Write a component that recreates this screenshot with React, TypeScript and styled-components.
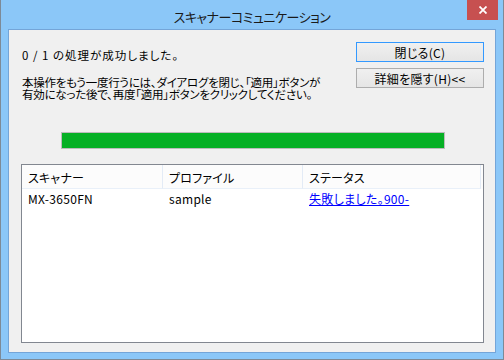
import styled, { createGlobalStyle } from "styled-components";

const columns = [
  { title: "スキャナー", width: 141 },
  { title: "プロファイル", width: 140 },
  { title: "ステータス", width: 178 },
];

export default function App() {
  return (
    <>
      <GlobalStyle />
      <Window>
        <TitleBar>
          <Title>スキャナーコミュニケーション</Title>
          <CloseButton aria-label="閉じる">
            <svg width="8" height="8" viewBox="0 0 8 8">
              <path d="M0.5 0.5 L7.5 7.5 M7.5 0.5 L0.5 7.5" stroke="#fff" strokeWidth="1.8" />
            </svg>
          </CloseButton>
        </TitleBar>
        <Client>
          <TopRow>
            <Message>
              <Paragraph $wide>0 / 1 の処理が成功しました。</Paragraph>
              <Paragraph>
                <Line>本操作をもう一度行うには、ダイアログを閉じ、「適用」ボタンが</Line>
                <Line>有効になった後で、再度「適用」ボタンをクリックしてください。</Line>
              </Paragraph>
            </Message>
            <ButtonColumn>
              <Button $focused>閉じる(C)</Button>
              <Button>詳細を隠す(H)&lt;&lt;</Button>
            </ButtonColumn>
          </TopRow>
          <Progress>
            <ProgressFill style={{ width: "100%" }} />
          </Progress>
          <ListView>
            <HeaderRow>
              {columns.map((c) => (
                <HeaderCell key={c.title} $width={c.width}>
                  {c.title}
                </HeaderCell>
              ))}
            </HeaderRow>
            <Row>
              <Cell $width={141}>MX-3650FN</Cell>
              <Cell $width={140}>sample</Cell>
              <Cell $width={178}>
                <StatusLink href="#">失敗しました。900-</StatusLink>
              </Cell>
            </Row>
          </ListView>
        </Client>
      </Window>
    </>
  );
}

// Styles
const GlobalStyle = createGlobalStyle`
  html, body {
    margin: 0;
    padding: 0;
    background: #ffffff;
  }
  * {
    box-sizing: border-box;
  }
`;

const Window = styled.div`
  width: 504px;
  height: 360px;
  display: flex;
  flex-direction: column;
  background: #8bc7f8;
  border-left: 1px solid #7d8a97;
  border-right: 1px solid #7d8a97;
  border-bottom: 1px solid #7d8a97;
  font-family: "Noto Sans CJK JP", "Noto Sans", sans-serif;
  font-feature-settings: "palt";
  color: #000;
`;

const TitleBar = styled.div`
  position: relative;
  height: 29px;
  flex: none;
  display: flex;
  align-items: center;
  justify-content: center;
  padding-top: 3px;
`;

const Title = styled.div`
  font-size: 13px;
  color: #1a1a1a;
  letter-spacing: -0.5px;
`;

const CloseButton = styled.div`
  position: absolute;
  top: 0;
  right: 5px;
  width: 31px;
  height: 20px;
  background: #c75050;
  display: flex;
  align-items: center;
  justify-content: center;
`;

const Client = styled.div`
  flex: 1;
  margin: 0 7px 6px 7px;
  border: 1px solid #74a5d8;
  background: #f0f0f0;
  display: flex;
  flex-direction: column;
  padding: 12px 11px 9px 12px;
  min-height: 0;
`;

const TopRow = styled.div`
  display: flex;
  justify-content: space-between;
  align-items: flex-start;
`;

const Message = styled.div`
  margin-top: 7px;
  margin-left: 1px;
  display: flex;
  flex-direction: column;
  gap: 15px;
`;

const Paragraph = styled.div<{ $wide?: boolean }>`
  font-size: 11.5px;
  line-height: 12px;
  letter-spacing: ${(p) => (p.$wide ? "1px" : "-0.25px")};
  white-space: nowrap;
`;

const Line = styled.div`
  height: 12px;
`;

const ButtonColumn = styled.div`
  display: flex;
  flex-direction: column;
  gap: 6px;
`;

const Button = styled.div<{ $focused?: boolean }>`
  width: 128px;
  height: 20px;
  border: 1px solid ${(p) => (p.$focused ? "#3399ff" : "#adadad")};
  background: linear-gradient(#f0f0f0, #e5e5e5);
  display: flex;
  align-items: center;
  justify-content: center;
  font-size: 12px;
  letter-spacing: 0.3px;
`;

const Progress = styled.div`
  align-self: center;
  width: 384px;
  height: 17px;
  margin-top: 32px;
  border: 1px solid #bcbcbc;
  background: #e6e6e6;
`;

const ProgressFill = styled.div`
  height: 100%;
  background: #06b025;
`;

const ListView = styled.div`
  flex: 1;
  margin-top: 15px;
  border: 1px solid #828790;
  background: #ffffff;
`;

const HeaderRow = styled.div`
  display: flex;
  height: 24px;
  background: #fcfcfc;
`;

const HeaderCell = styled.div<{ $width: number }>`
  width: ${(p) => p.$width}px;
  flex: none;
  border-right: 1px solid #e3ebf6;
  border-bottom: 1px solid #e9f0f9;
  padding: 2px 0 0 6px;
  display: flex;
  align-items: center;
  font-size: 12px;
  letter-spacing: 0.2px;
`;

const Row = styled.div`
  display: flex;
  height: 17px;
  margin-top: 1px;
`;

const Cell = styled.div<{ $width: number }>`
  width: ${(p) => p.$width}px;
  flex: none;
  padding-left: 6px;
  display: flex;
  align-items: center;
  font-size: 12px;
  letter-spacing: 0.3px;
`;

const StatusLink = styled.a`
  color: #0000ff;
  text-decoration: underline;
`;
